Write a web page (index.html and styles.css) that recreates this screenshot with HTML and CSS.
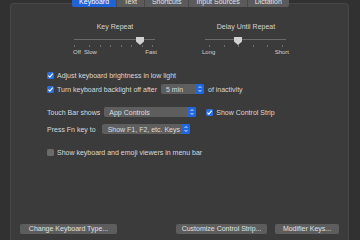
FILE: index.html
```html
<!doctype html>
<html lang="en">
  <head>
    <meta charset="UTF-8" />
    <title>Keyboard</title>
    <link rel="stylesheet" href="styles.css">
  </head>
  <body>
    <div class="tabs">
      <span class="tab active">Keyboard</span>
      <span class="tab">Text</span>
      <span class="tab">Shortcuts</span>
      <span class="tab">Input Sources</span>
      <span class="tab">Dictation</span>
    </div>

    <div class="panel">
      <div class="sliders">
        <div class="slider-group repeat">
          <div class="slider-title">Key Repeat</div>
          <div class="slider">
            <div class="track"></div>
            <div class="thumb"></div>
          </div>
          <div class="ticks">
            <i></i>
            <div class="spread"><i></i><i></i><i></i><i></i><i></i><i></i><i></i></div>
          </div>
          <div class="slider-labels">
            <span class="pair"><span>Off</span><span>Slow</span></span>
            <span>Fast</span>
          </div>
        </div>

        <div class="slider-group delay">
          <div class="slider-title">Delay Until Repeat</div>
          <div class="slider">
            <div class="track"></div>
            <div class="thumb"></div>
          </div>
          <div class="ticks">
            <div class="spread"><i></i><i></i><i></i><i></i><i></i><i></i></div>
          </div>
          <div class="slider-labels">
            <span>Long</span>
            <span>Short</span>
          </div>
        </div>
      </div>

      <div class="options">
        <label class="row">
          <span class="check on"><svg viewBox="0 0 8 8"><path d="M1.6 4.2 L3.3 5.9 L6.5 1.9" /></svg></span>
          Adjust keyboard brightness in low light
        </label>

        <div class="row">
          <span class="check on"><svg viewBox="0 0 8 8"><path d="M1.6 4.2 L3.3 5.9 L6.5 1.9" /></svg></span>
          <span>Turn keyboard backlight off after</span>
          <span class="popup short">5 min<span class="stepper"><svg viewBox="0 0 8 10"><path d="M2.5 4 L4 2.5 L5.5 4 M2.5 6 L4 7.5 L5.5 6" /></svg></span></span>
          <span>of inactivity</span>
        </div>

        <div class="row spaced">
          <span>Touch Bar shows</span>
          <span class="popup wide">App Controls<span class="stepper"><svg viewBox="0 0 8 10"><path d="M2.5 4 L4 2.5 L5.5 4 M2.5 6 L4 7.5 L5.5 6" /></svg></span></span>
          <span class="check on strip"><svg viewBox="0 0 8 8"><path d="M1.6 4.2 L3.3 5.9 L6.5 1.9" /></svg></span>
          <span>Show Control Strip</span>
        </div>

        <div class="row fn">
          <span>Press Fn key to</span>
          <span class="popup fnkeys">Show F1, F2, etc. Keys<span class="stepper"><svg viewBox="0 0 8 10"><path d="M2.5 4 L4 2.5 L5.5 4 M2.5 6 L4 7.5 L5.5 6" /></svg></span></span>
        </div>

        <label class="row spaced">
          <span class="check"></span>
          Show keyboard and emoji viewers in menu bar
        </label>
      </div>

      <div class="buttons">
        <button class="btn change">Change Keyboard Type...</button>
        <div class="right-buttons">
          <button class="btn customize">Customize Control Strip...</button>
          <button class="btn modifier">Modifier Keys...</button>
        </div>
      </div>
    </div>
  </body>
</html>
```

FILE: styles.css
```css
* {
  margin: 0;
  padding: 0;
  box-sizing: border-box;
}

body {
  font-family: 'Liberation Sans', Arial, sans-serif;
  font-size: 7px;
  background: #313131;
  color: #d9d9d9;
  width: 360px;
  height: 240px;
  overflow: hidden;
}

/* Segmented tabs */
.tabs {
  display: flex;
  justify-content: center;
  height: 11px;
  margin-top: -4px;
  margin-bottom: -4px;
  padding-left: 1px;
  position: relative;
  z-index: 1;
}

.tab {
  display: flex;
  align-items: center;
  padding: 0 7px;
  background: #5b5b5b;
  color: #e2e2e2;
  border-left: 1px solid #484848;
  line-height: 11px;
}

.tab:first-child {
  border-left: none;
  border-radius: 0 0 0 2px;
}

.tab:last-child {
  border-radius: 0 0 2px 0;
}

.tab.active {
  background: #1f63d6;
  color: #fff;
}

/* Tab box */
.panel {
  margin-left: 10px;
  width: 339px;
  height: 237px;
  background: #3b3b3b;
  border: 1px solid #474747;
  border-bottom: none;
  border-radius: 4px 4px 0 0;
  padding-top: 19px;
}

.sliders {
  display: flex;
  gap: 47px;
  padding-left: 62px;
}

.slider-group {
  width: 84px;
}

.slider-title {
  text-align: center;
  line-height: 8px;
  color: #d4d4d4;
  margin-bottom: 4px;
}

.slider {
  position: relative;
  height: 10px;
}

.track {
  position: absolute;
  top: 4px;
  left: 1px;
  width: 81px;
  height: 1px;
  background: #6a6a6a;
}

.thumb {
  position: absolute;
  top: 2px;
  width: 8px;
  height: 8px;
  background: #d2d2d2;
  clip-path: polygon(0 0, 100% 0, 100% 55%, 50% 100%, 0 55%);
}

.repeat .thumb {
  left: 63px;
}

.delay .thumb {
  left: 30px;
}

.ticks {
  display: flex;
  height: 2px;
}

.ticks i {
  display: block;
  width: 1px;
  height: 2px;
  background: #6e6e6e;
}

.ticks .spread {
  flex: 1;
  display: flex;
  justify-content: space-between;
}

.repeat .ticks {
  padding: 0 4px 0 1px;
}

.repeat .ticks .spread {
  margin-left: 14px;
}

.delay .ticks {
  padding: 0 5px;
}

.slider-labels {
  display: flex;
  justify-content: space-between;
  font-size: 6px;
  line-height: 8px;
  margin-top: 1px;
  color: #cfcfcf;
}

.slider-labels .pair {
  display: flex;
  gap: 3px;
}

.delay .slider-labels {
  margin: 1px -1px 0 -2px;
}

/* Options */
.options {
  display: flex;
  flex-direction: column;
  padding-left: 36px;
  margin-top: 14px;
}

.row {
  display: flex;
  align-items: center;
  height: 10px;
  gap: 3px;
  margin-top: 4px;
  white-space: nowrap;
}

.row:first-child {
  margin-top: 0;
}

.row.spaced {
  margin-top: 13px;
}

.row.fn {
  margin-top: 7px;
  gap: 5px;
}

.check {
  display: flex;
  align-items: center;
  justify-content: center;
  width: 7px;
  height: 7px;
  border-radius: 1.5px;
  background: #6a6a6a;
  flex-shrink: 0;
}

.check.on {
  background: #2a6fdc;
}

.check svg {
  width: 7px;
  height: 7px;
  fill: none;
  stroke: #fff;
  stroke-width: 1.2;
}

.check.strip {
  margin-left: 7px;
}

.popup {
  display: flex;
  align-items: center;
  justify-content: space-between;
  height: 10px;
  padding-left: 5px;
  margin: 0 1px;
  background: #5e5e5e;
  border-radius: 2px;
  color: #dcdcdc;
}

.popup.short {
  width: 43px;
}

.popup.wide {
  width: 92px;
  margin-right: 0;
}

.popup.fnkeys {
  width: 88px;
  padding-left: 6px;
}

.stepper {
  display: flex;
  align-items: center;
  justify-content: center;
  width: 8px;
  height: 10px;
  background: #2268dc;
  border-radius: 0 2px 2px 0;
}

.stepper svg {
  width: 8px;
  height: 10px;
  fill: none;
  stroke: #fff;
  stroke-width: 0.8;
}

/* Bottom buttons */
.buttons {
  display: flex;
  justify-content: space-between;
  padding: 0 9px;
  margin-top: 67px;
}

.right-buttons {
  display: flex;
  gap: 8px;
}

.btn {
  font-family: inherit;
  font-size: 7px;
  height: 10px;
  line-height: 10px;
  border: none;
  border-radius: 2px;
  background: #5d5d5d;
  color: #e0e0e0;
  text-align: center;
}

.btn.change {
  width: 97px;
}

.btn.customize {
  width: 91px;
}

.btn.modifier {
  width: 64px;
}
```
